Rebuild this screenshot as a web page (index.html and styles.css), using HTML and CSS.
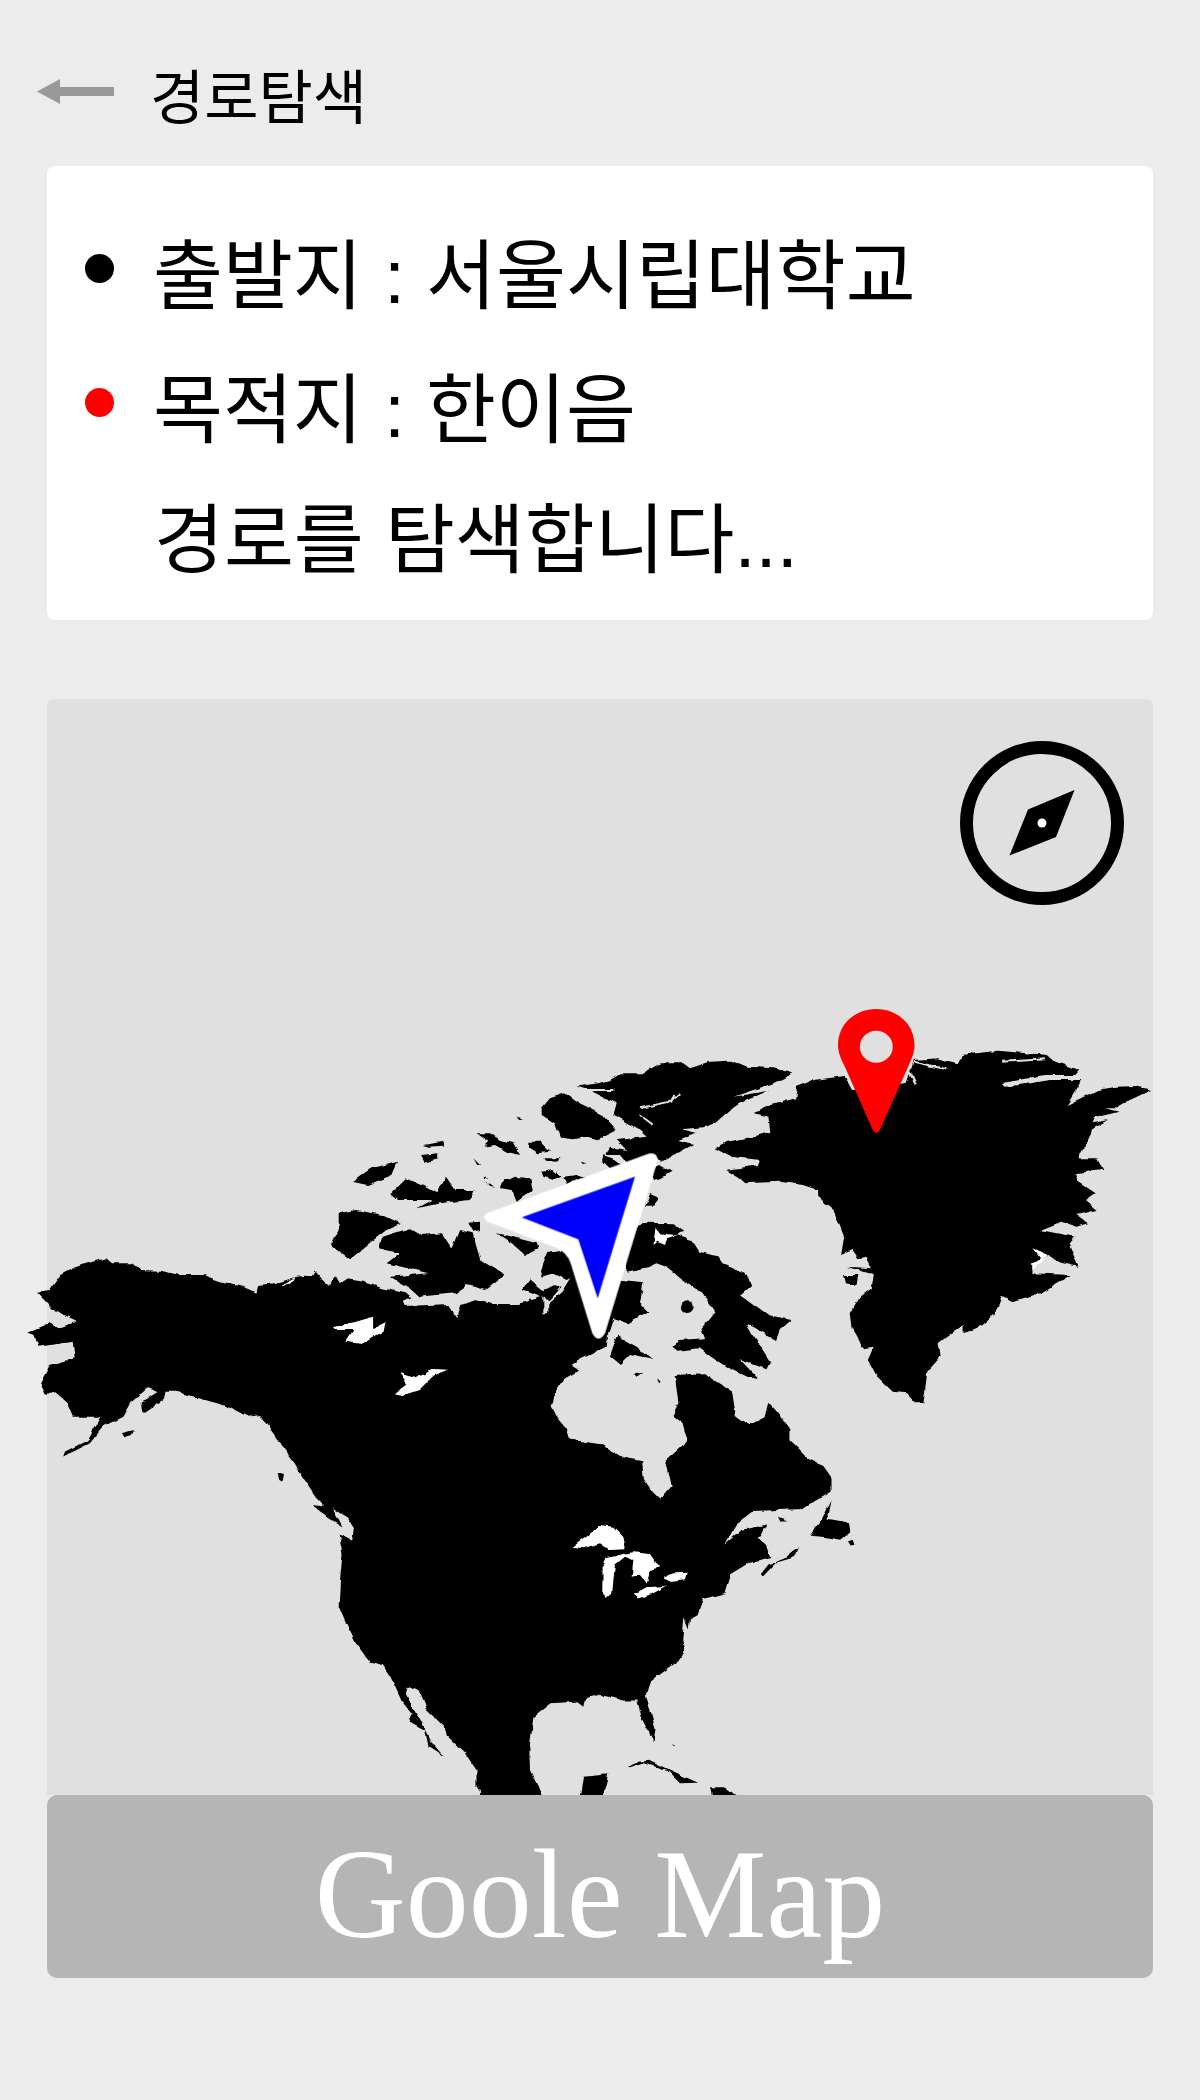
FILE: index.html
```html
<!DOCTYPE html>
<html lang="ko">
<head>
<meta charset="utf-8">
<title>경로탐색</title>
<link rel="stylesheet" href="styles.css">
</head>
<body>
<div class="page">
  <header class="top">
    <svg class="back" viewBox="0 0 77 26" aria-hidden="true"><path d="M0 12.5 L23 0 V8 H77 V17 H23 V25 Z"/></svg>
    <h1 class="title">경로탐색</h1>
  </header>

  <section class="card">
    <div class="row"><span class="dot dot-start"></span><span class="row-text">출발지 : 서울시립대학교</span></div>
    <div class="row"><span class="dot dot-end"></span><span class="row-text">목적지 : 한이음</span></div>
    <div class="row row-plain"><span class="row-text">경로를 탐색합니다...</span></div>
  </section>

  <section class="map">
    <svg class="land" viewBox="0 699 1200 1096" aria-hidden="true">
      <defs>
        <filter id="coast" filterUnits="userSpaceOnUse" x="0" y="900" width="1200" height="950">
          <feTurbulence type="fractalNoise" baseFrequency="0.09" numOctaves="2" seed="4" result="noise"/>
          <feDisplacementMap in="SourceGraphic" in2="noise" scale="5" xChannelSelector="R" yChannelSelector="G"/>
        </filter>
      </defs>
      <g class="landmass" filter="url(#coast)">
      <!-- crop scale A: Alaska, Pacific coast -->
      <g class="black" transform="translate(0 1000) scale(.3827 .3333)">
        <polygon points="97,878 130,873 160,825 210,795 275,775 290,790 345,790 365,810 420,812 470,825 530,825 580,845 625,855 670,878 675,855 720,850 775,830 815,825 822,812 840,835 860,855 875,832 885,852 910,838 950,845 1000,865 1060,880 1075,895 1055,905 1060,918 1120,915 1170,912 1195,955 1205,915 1240,900 1300,915 1370,915 1385,895 1460,1000 1450,1100 1300,2400 1270,2400 1245,2360 1245,2310 1215,2260 1170,2210 1165,2185 1115,2130 1100,2080 1085,2070 1065,2060 1060,2080 1075,2120 1105,2170 1130,2230 1160,2270 1120,2240 1110,2190 1070,2165 1078,2145 1050,2105 1020,2030 1000,1995 965,1985 930,1930 900,1860 885,1820 888,1750 895,1660 885,1600 920,1620 925,1585 905,1550 870,1525 895,1580 860,1555 815,1515 850,1520 825,1490 790,1430 770,1390 730,1330 700,1280 680,1245 650,1250 600,1220 520,1195 460,1175 430,1175 425,1200 375,1240 370,1205 410,1175 385,1165 340,1210 320,1250 270,1280 235,1330 200,1350 165,1370 170,1355 230,1320 265,1250 190,1250 175,1210 140,1175 120,1185 105,1150 130,1095 195,1075 190,1025 100,1040 90,1005 68,998 130,968 150,985 200,965 145,935"/>
        <polygon points="885,640 930,630 1000,645 1050,672 1010,690 965,730 915,778 865,735 885,690"/>
        <polygon points="1000,710 1070,685 1100,705 1155,700 1180,745 1200,690 1235,700 1255,780 1320,825 1270,870 1220,855 1190,880 1095,890 1070,865 1020,830 1120,820 1010,790 1045,760 990,745"/>
        <polygon points="920,545 970,505 1040,485 1025,525 960,555"/>
        <polygon points="1020,580 1060,535 1110,560 1140,580 1165,530 1190,570 1240,570 1225,600 1150,610 1090,625 1130,600 1040,600"/>
        <polygon points="1105,435 1160,425 1160,437 1120,440"/>
        <polygon points="1100,465 1145,460 1145,475 1110,485"/>
        <polygon points="318,1300 350,1290 345,1305 325,1312"/>
        <polygon points="725,1420 742,1425 738,1445 730,1440"/>
      </g>
      <g class="gap" transform="translate(0 1000) scale(.3827 .3333)">
        <polyline points="660,1285 680,1310 692,1330"/>
        <polyline points="690,1290 712,1325 735,1380"/>
      </g>
      <g class="white" transform="translate(0 1000) scale(.3827 .3333)">
        <polygon points="870,985 930,965 975,950 975,985 1010,965 1005,995 970,1015 945,1032 905,1025 925,990 875,990"/>
        <polygon points="1032,1180 1065,1150 1045,1118 1085,1135 1130,1110 1170,1112 1130,1130 1095,1170 1055,1185"/>
        <polygon points="1362,1425 1380,1422 1395,1470 1408,1492 1385,1485 1365,1455"/>
        <polygon points="735,855 775,830 770,840 740,858"/>
      </g>

      <!-- crop scale B: Arctic, Hudson Bay -->
      <g class="black" transform="translate(440 1040) scale(.3333)">
        <polygon points="310,770 310,820 325,820 325,790 365,755 400,700 520,720 610,730 600,790 625,815 565,850 520,835 505,880 500,920 470,935 400,960 300,1000 200,950 240,790"/>
        <polygon points="410,140 470,130 510,120 545,100 610,100 660,70 730,70 750,85 810,65 870,62 925,80 1000,85 1060,100 1000,130 880,170 985,152 900,190 870,210 825,250 790,262 720,268 770,278 715,300 760,312 700,345 665,365 645,345 560,370 540,345 500,345 510,320 560,330 530,300 620,290 590,265 520,225 530,190 450,150"/>
        <polygon points="305,205 330,175 375,160 410,185 450,205 490,225 530,270 470,300 430,290 400,295 360,290 345,250 305,225"/>
        <polygon points="110,280 150,280 180,300 220,310 240,345 200,335 165,315 130,320 145,305"/>
        <polygon points="265,305 300,305 330,335 295,340 265,320"/>
        <polygon points="310,355 365,355 350,365 315,362"/>
        <polygon points="225,232 250,240 235,240"/>
        <polygon points="100,355 120,375 112,375"/>
        <polygon points="420,365 440,370 425,372"/>
        <polygon points="490,345 520,355 550,380 510,385 490,365"/>
        <polygon points="305,395 340,390 365,410 340,420 310,410"/>
        <polygon points="370,410 410,405 440,410 380,430"/>
        <polygon points="130,410 145,415 135,418"/>
        <polygon points="140,425 165,440 150,438"/>
        <polygon points="205,420 225,410 270,415 278,450 230,485 215,450 180,445 190,420"/>
        <polygon points="85,548 120,545 120,570 100,575"/>
        <polygon points="300,690 320,640 380,630 420,700 380,720 340,700 305,710"/>
        <polygon points="245,750 270,718 310,750 340,735 365,740 330,780 290,765"/>
        <polygon points="170,580 215,590 290,610 295,625 255,645 215,610"/>
        <polygon points="640,385 660,375 695,395 660,415 638,420"/>
        <polygon points="630,462 660,475 640,500 615,500"/>
        <polygon points="535,880 510,950 540,975 570,945 640,960 590,920 545,895"/>
        <polygon points="580,1000 610,995 590,1010"/>
        <polygon points="655,1015 665,1025 660,1030"/>
        <circle cx="742" cy="800" r="19"/>
      </g>
      <g class="white" transform="translate(440 1040) scale(.3333)">
        <polygon points="845,840 860,830 890,850 865,865 850,862"/>
      </g>

      <!-- crop scale C: Greenland, Baffin -->
      <g class="black" transform="translate(600 1000) scale(.3827 .3333)">
        <polygon points="60,690 125,668 190,670 220,695 200,705 240,720 260,755 310,770 325,795 385,825 395,858 368,885 440,945 500,960 470,990 460,1020 400,980 380,975 420,1040 445,1085 435,1108 365,1078 415,1138 385,1130 330,1100 290,1070 260,1045 205,1052 192,1040 205,1020 275,1015 265,985 300,935 265,875 210,835 175,800 150,790 130,800 70,815"/>
        <polygon points="300,445 330,425 400,410 445,395 440,350 400,340 450,315 510,295 515,260 540,250 560,240 640,228 660,270 800,250 815,200 820,180 880,175 935,190 945,165 1040,152 1170,165 1190,185 1250,210 1240,225 1160,225 1050,250 1060,260 1180,240 1260,240 1220,315 1300,270 1350,260 1400,258 1440,270 1385,300 1350,325 1320,325 1355,335 1290,355 1285,370 1330,360 1290,385 1275,420 1250,475 1300,475 1315,510 1240,520 1250,545 1295,580 1270,600 1300,630 1245,645 1275,670 1245,680 1205,665 1150,690 1240,710 1225,730 1250,800 1210,790 1130,745 1170,765 1130,790 1130,820 1230,825 1150,880 1075,905 1050,890 1030,945 1000,975 950,1000 950,975 905,1010 885,1030 890,1070 855,1115 850,1170 845,1210 825,1210 800,1180 765,1175 720,1125 700,1080 715,1040 690,1045 660,985 655,940 680,890 710,865 715,825 645,800 710,805 695,770 675,775 660,750 630,765 638,710 610,630 570,590 570,570 530,555 470,545 380,550 365,535 330,510 415,495 420,480 340,470"/>
        <polygon points="635,825 675,825 670,855 640,850"/>
      </g>
      <g class="white" transform="translate(600 1000) scale(.3827 .3333)">
        <polygon points="145,680 155,700 200,705 175,715 170,735 150,725 140,735"/>
        <polygon points="1130,745 1170,765 1130,810 1130,790 1150,775"/>
      </g>
      <g class="gap" transform="translate(600 1000) scale(.3827 .3333)">
        <polyline points="1048,185 1165,178"/>
        <polyline points="820,185 905,208"/>
        <polyline points="805,210 825,250"/>
      </g>
      <g class="gap" transform="translate(440 1040) scale(.3333)">
        <polyline points="420,150 520,150"/>
        <polyline points="600,205 690,185 718,160"/>
        <polyline points="690,190 700,165"/>
        <polyline points="600,225 640,255"/>
      </g>

      <!-- crop scale D: Atlantic coast -->
      <g class="black" transform="translate(600 1400) scale(.3827)">
        <polygon points="0,770 60,785 95,785 105,825 140,892 145,860 120,770 130,735 205,680 220,655 215,630 220,570 232,600 235,570 255,560 270,520 325,505 340,455 390,425 445,410 435,380 415,360 440,325 370,340 325,378 360,320 400,290 530,285 605,240 605,205 580,170 540,150 495,105 495,80 470,40 440,5 430,45 390,65 355,40 345,-22 300,-52 270,-70 195,-65 205,8 190,39 215,60 228,108 170,160 185,225 155,260 135,240 115,210 110,160 60,150 0,115 -78,104 -87,74 -113,43 -126,17 -117,-18 -91,-57 -52,-79 -74,-92 -52,-105 -9,-127 18,-140 -200,-140 -400,800 -200,770"/>
        <polygon points="548,355 580,310 605,260 595,310 650,320 655,345 630,365 590,358"/>
        <polygon points="648,370 660,365 665,378 655,380"/>
        <polygon points="420,455 440,430 480,415 520,385 510,410 460,425 425,462"/>
        <polygon points="465,305 490,315 470,315"/>
      </g>

      <!-- crop scale E: Gulf of Mexico, Great Lakes -->
      <g class="black" transform="translate(380 1480) scale(.3333)">
        <polygon points="300,500 300,960 490,960 450,870 448,800 455,760 460,710 510,670 590,665 610,680 615,655 660,645"/>
        <polygon points="610,890 685,883 665,960 597,960"/>
        <polygon points="748,860 770,845 810,842 880,875 955,908 900,910 860,870 790,850 750,862"/>
        <polygon points="990,922 1035,922 1080,960 1000,960"/>
        <circle cx="878" cy="797" r="3"/>
      </g>
      <g class="white" transform="translate(380 1480) scale(.3333)">
        <polygon points="578,200 620,170 660,135 700,140 730,170 738,208 690,210 660,190 610,205"/>
        <polygon points="668,265 680,235 730,222 760,217 810,222 838,262 810,270 800,310 780,285 755,290 760,240 735,230 705,255 697,335 680,350 667,335"/>
        <polygon points="765,340 800,322 860,318 810,345 775,355"/>
        <polygon points="848,295 880,280 920,278 915,298 870,303"/>
      </g>
      </g>

      <!-- destination pin -->
      <path class="pin" fill-rule="evenodd" d="M876.3 1132.7 C874.5 1132.7 873.4 1131.5 872.6 1129.8 L845 1067 C840.5 1058 838 1052 838 1045.5 C838 1024 855 1009 876.3 1009 C897.5 1009 914.5 1024 914.5 1045.5 C914.5 1052 912 1058 908 1067 L880 1129.8 C879.2 1131.5 878 1132.7 876.3 1132.7 Z M876.3 1030.7 C867 1030.7 859.8 1037.8 859.8 1046.7 C859.8 1055.6 867 1062.7 876.3 1062.7 C885.4 1062.7 892.8 1055.6 892.8 1046.7 C892.8 1037.8 885.4 1030.7 876.3 1030.7 Z"/>

      <!-- current position arrow -->
      <g transform="translate(440 1040) scale(.3333)">
        <path class="arrow-edge" d="M140 520 L620 343 Q655 332 652 365 L495 880 Q475 912 457 880 L392 670 Q380 635 345 622 L142 545 Q122 532 140 520 Z"/>
        <polygon class="arrow-fill" points="245,532 585,410 473,775 415,598"/>
      </g>
    </svg>

    <svg class="compass" viewBox="0 0 164 164" aria-hidden="true">
      <circle class="compass-ring" cx="82" cy="82" r="75.5"/>
      <polygon class="compass-needle" points="114.5,49 96,96 49.5,114.5 68,68.5"/>
      <circle class="compass-pivot" cx="82" cy="82" r="4.5"/>
    </svg>
  </section>

  <button class="map-button" type="button">Goole Map</button>
</div>
</body>
</html>
```

FILE: styles.css
```css
* {
  box-sizing: border-box;
}

html,
body {
  margin: 0;
  padding: 0;
}

body {
  background: #ececec;
  color: #000;
  font-family: "Liberation Sans", "Noto Sans CJK KR", sans-serif;
}

.page {
  width: 1200px;
  height: 2100px;
  padding: 0 47px;
  display: flex;
  flex-direction: column;
}

.top {
  height: 166px;
  margin-left: -47px;
  padding: 0 0 0 37px;
  display: flex;
  align-items: center;
  gap: 36px;
}

.back {
  width: 77px;
  height: 26px;
  margin-top: 18px;
  fill: #999;
  flex: none;
}

.title {
  margin: 32px 0 0;
  font-size: 59px;
  font-weight: 400;
  line-height: 1;
}

.card {
  height: 454px;
  padding: 35px 0 0 38px;
  background: #fff;
  border-radius: 8px;
}

.row {
  height: 134px;
  display: flex;
  align-items: center;
  gap: 39px;
}

.row-plain {
  height: 126px;
  padding-left: 69px;
}

.row-text {
  padding-top: 18px;
  font-size: 76px;
  line-height: 1;
  white-space: nowrap;
}

.dot {
  width: 29px;
  height: 29px;
  border-radius: 50%;
  flex: none;
}

.dot-start {
  background: #000;
}

.dot-end {
  background: #f00;
}

.map {
  position: relative;
  height: 1096px;
  margin-top: 79px;
  background: #e0e0e0;
  border-radius: 8px 8px 0 0;
}

.land {
  position: absolute;
  left: -47px;
  top: 0;
  width: 1200px;
  height: 1096px;
  overflow: hidden;
}

.black {
  fill: #000;
}

.white {
  fill: #fff;
}

.gap {
  fill: none;
  stroke: #e0e0e0;
  stroke-width: 6;
}

.pin {
  fill: #f00;
}

.arrow-edge {
  fill: #fff;
}

.arrow-fill {
  fill: #00f;
}

.compass {
  position: absolute;
  right: 29px;
  top: 42px;
  width: 164px;
  height: 164px;
}

.compass-ring {
  fill: none;
  stroke: #000;
  stroke-width: 13;
}

.compass-needle {
  fill: #000;
}

.compass-pivot {
  fill: #fff;
}

.map-button {
  height: 183px;
  padding: 17px 0 0;
  border: 0;
  border-radius: 10px;
  background: #b5b5b5;
  color: #fff;
  font-family: "Liberation Serif", "Times New Roman", serif;
  font-size: 126px;
  line-height: 1;
  text-align: center;
}
```
